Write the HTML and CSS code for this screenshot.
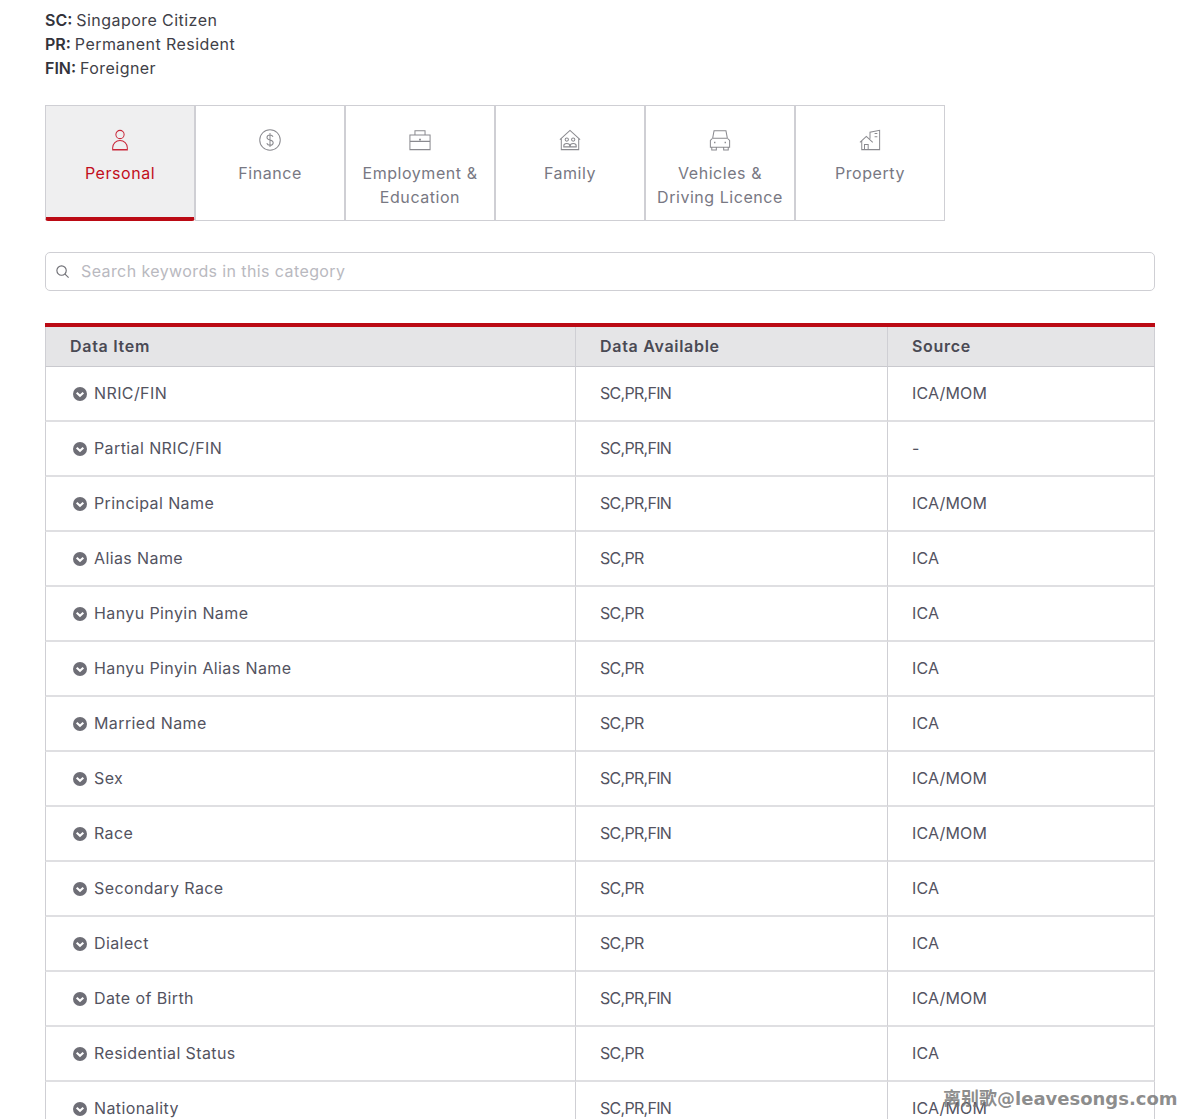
FILE: index.html
```html
<!DOCTYPE html>
<html lang="en">
<head>
<meta charset="utf-8">
<title>Data Items</title>
<link rel="stylesheet" href="styles.css">
</head>
<body>
<main class="page">
  <div class="legend">
    <div><b>SC:</b> Singapore Citizen</div>
    <div><b>PR:</b> Permanent Resident</div>
    <div><b>FIN:</b> Foreigner</div>
  </div>
  <nav class="tabs">
    <a class="tab active">
      <svg class="tab-icon" viewBox="0 0 24 24"><circle cx="12" cy="6" r="4.500"/><path d="M4 23v-2.500a8 8 0 0 1 16 0V23zM4 22.500h16"/></svg>
      <span>Personal</span>
    </a>
    <a class="tab">
      <svg class="tab-icon" viewBox="0 0 24 24"><circle cx="12" cy="12" r="11.200"/><path d="M15.300 8.500c-.6-1.400-1.800-2-3.300-2-1.800 0-3.300 1-3.300 2.700 0 3.500 6.800 2.100 6.800 5.700 0 1.700-1.600 2.800-3.500 2.800-1.600 0-3-.8-3.500-2.200M12 4.300v15.400"/></svg>
      <span>Finance</span>
    </a>
    <a class="tab">
      <svg class="tab-icon" viewBox="0 0 24 24"><path d="M1 6.500h22v16H1zM6.500 6.500V2h11v4.500M1 13.500h22"/><path class="dot" d="M11 10.500h2v2h-2z"/></svg>
      <span>Employment &amp; Education</span>
    </a>
    <a class="tab">
      <svg class="tab-icon" viewBox="0 0 24 24"><path d="M1 11.500 12 1.500l11 10M2.500 10.500V22.500h19V10.500"/><circle cx="8.500" cy="11.500" r="1.800"/><circle cx="15.500" cy="11.500" r="1.800"/><path d="M5.200 19.500v-1a3.300 2.600 0 0 1 6.600 0v1zM12.200 19.500v-1a3.300 2.600 0 0 1 6.600 0v1z"/></svg>
      <span>Family</span>
    </a>
    <a class="tab">
      <svg class="tab-icon" viewBox="0 0 24 24"><path d="M4 10 5.500 2h13L20 10M1.500 12.500 4 10h16l2.500 2.500V20h-21zM3 20v3h5v-3M16 20v3h5v-3"/><path class="dot" d="M5.500 14h1.500v1.500H5.500zM17 14h1.500v1.500H17z"/></svg>
      <span>Vehicles &amp; Driving Licence</span>
    </a>
    <a class="tab">
      <svg class="tab-icon" viewBox="0 0 24 24"><path d="M1 14.500 8 8l7 6.500M3 13v9.500h19.500V1.500L12 3.500v7M6 22.500V17h4v5.500M17 5h3M17 8.500h3"/></svg>
      <span>Property</span>
    </a>
  </nav>
  <label class="search">
    <svg class="search-icon" viewBox="0 0 16 16"><circle cx="7" cy="7" r="5"/><path d="m10.700 10.700 3.800 3.800"/></svg>
    <input class="search-input" type="text" placeholder="Search keywords in this category">
  </label>
  <table class="data">
    <colgroup><col class="c1"><col class="c2"><col class="c3"></colgroup>
    <thead><tr><th>Data Item</th><th>Data Available</th><th>Source</th></tr></thead>
    <tbody id="rows">
      <tr><td><svg class="chev" viewBox="0 0 14 14"><circle cx="7" cy="7" r="7"/><path d="m3.700 5.700 3.300 3.100 3.300-3.100"/></svg>NRIC/FIN</td><td>SC,PR,FIN</td><td>ICA/MOM</td></tr>
      <tr><td><svg class="chev" viewBox="0 0 14 14"><circle cx="7" cy="7" r="7"/><path d="m3.700 5.700 3.300 3.100 3.300-3.100"/></svg>Partial NRIC/FIN</td><td>SC,PR,FIN</td><td>-</td></tr>
      <tr><td><svg class="chev" viewBox="0 0 14 14"><circle cx="7" cy="7" r="7"/><path d="m3.700 5.700 3.300 3.100 3.300-3.100"/></svg>Principal Name</td><td>SC,PR,FIN</td><td>ICA/MOM</td></tr>
      <tr><td><svg class="chev" viewBox="0 0 14 14"><circle cx="7" cy="7" r="7"/><path d="m3.700 5.700 3.300 3.100 3.300-3.100"/></svg>Alias Name</td><td>SC,PR</td><td>ICA</td></tr>
      <tr><td><svg class="chev" viewBox="0 0 14 14"><circle cx="7" cy="7" r="7"/><path d="m3.700 5.700 3.300 3.100 3.300-3.100"/></svg>Hanyu Pinyin Name</td><td>SC,PR</td><td>ICA</td></tr>
      <tr><td><svg class="chev" viewBox="0 0 14 14"><circle cx="7" cy="7" r="7"/><path d="m3.700 5.700 3.300 3.100 3.300-3.100"/></svg>Hanyu Pinyin Alias Name</td><td>SC,PR</td><td>ICA</td></tr>
      <tr><td><svg class="chev" viewBox="0 0 14 14"><circle cx="7" cy="7" r="7"/><path d="m3.700 5.700 3.300 3.100 3.300-3.100"/></svg>Married Name</td><td>SC,PR</td><td>ICA</td></tr>
      <tr><td><svg class="chev" viewBox="0 0 14 14"><circle cx="7" cy="7" r="7"/><path d="m3.700 5.700 3.300 3.100 3.300-3.100"/></svg>Sex</td><td>SC,PR,FIN</td><td>ICA/MOM</td></tr>
      <tr><td><svg class="chev" viewBox="0 0 14 14"><circle cx="7" cy="7" r="7"/><path d="m3.700 5.700 3.300 3.100 3.300-3.100"/></svg>Race</td><td>SC,PR,FIN</td><td>ICA/MOM</td></tr>
      <tr><td><svg class="chev" viewBox="0 0 14 14"><circle cx="7" cy="7" r="7"/><path d="m3.700 5.700 3.300 3.100 3.300-3.100"/></svg>Secondary Race</td><td>SC,PR</td><td>ICA</td></tr>
      <tr><td><svg class="chev" viewBox="0 0 14 14"><circle cx="7" cy="7" r="7"/><path d="m3.700 5.700 3.300 3.100 3.300-3.100"/></svg>Dialect</td><td>SC,PR</td><td>ICA</td></tr>
      <tr><td><svg class="chev" viewBox="0 0 14 14"><circle cx="7" cy="7" r="7"/><path d="m3.700 5.700 3.300 3.100 3.300-3.100"/></svg>Date of Birth</td><td>SC,PR,FIN</td><td>ICA/MOM</td></tr>
      <tr><td><svg class="chev" viewBox="0 0 14 14"><circle cx="7" cy="7" r="7"/><path d="m3.700 5.700 3.300 3.100 3.300-3.100"/></svg>Residential Status</td><td>SC,PR</td><td>ICA</td></tr>
      <tr><td><svg class="chev" viewBox="0 0 14 14"><circle cx="7" cy="7" r="7"/><path d="m3.700 5.700 3.300 3.100 3.300-3.100"/></svg>Nationality</td><td>SC,PR,FIN</td><td>ICA/MOM</td></tr>
    </tbody>
  </table>
</main>
<div class="watermark">离别歌@leavesongs.com</div>
</body>
</html>
```
FILE: styles.css
```css
* { box-sizing: border-box; }
html, body { margin: 0; height: 1119px; overflow: hidden; background: #fff; }
body {
  position: relative;
  font-family: Inter, "Noto Sans", sans-serif;
  font-size: 16px;
  line-height: 24px;
  color: #53535f;
}
.page { padding: 8px 33px 0 45px; }
.legend { color: #3f3f48; letter-spacing: 0.45px; }
.legend b { font-weight: 600; color: #33333b; letter-spacing: 0; margin-right: -1px; }
.tabs { display: flex; margin-top: 25px; }
.tab {
  width: 150px;
  height: 116px;
  padding: 23px 8px 0;
  border: 1px solid #cfcfd4;
  text-align: center;
  color: #787883;
  letter-spacing: 0.55px;
  display: flex;
  flex-direction: column;
  align-items: center;
}
.tab-icon { width: 22px; height: 22px; fill: none; stroke: #8a8a8f; stroke-width: 1.1; flex: none; margin-bottom: 10px; }
.tab-icon .dot { fill: #8a8a8f; stroke: none; }
.tab.active {
  background: #efeff0;
  color: #c20e1c;
  border-bottom: 4px solid #bb0a14;
  border-radius: 0 0 3px 3px;
}
.tab.active .tab-icon { stroke: #c9283a; }
.search {
  display: flex;
  align-items: center;
  height: 39px;
  margin-top: 31px;
  padding: 0 9px;
  border: 1px solid #cfcfd4;
  border-radius: 5px;
}
.search-icon { width: 15px; height: 15px; fill: none; stroke: #6f6f75; stroke-width: 1.2; flex: none; }
.search-input {
  flex: 1;
  margin-left: 11px;
  padding: 0 0 2px;
  border: 0;
  outline: 0;
  background: none;
  font: inherit;
  letter-spacing: 0.4px;
}
.search-input::placeholder { color: #b9b9c0; opacity: 1; }
.data {
  width: 1110px;
  margin-top: 32px;
  table-layout: fixed;
  border-collapse: separate;
  border-spacing: 0;
  border-top: 4px solid #bb0a14;
}
.c1 { width: 530px; }
.c2 { width: 312px; }
.c3 { width: 268px; }
.data th {
  height: 40px;
  padding: 0 24px 2px;
  text-align: left;
  font-weight: 600;
  letter-spacing: 0.7px;
  color: #4a4a54;
  background: #e5e5e7;
  border-left: 1px solid #cfcfd4;
  border-bottom: 1px solid #c9c9ce;
}
.data td {
  height: 55px;
  padding: 0 24px 2px;
  border-left: 1px solid #cfcfd4;
  border-bottom: 2px solid #dfdfe2;
  white-space: nowrap;
  letter-spacing: 0.4px;
}
.data td:nth-child(2) { letter-spacing: -0.7px; }
.data td:nth-child(3) { letter-spacing: 0.15px; }
.data th:last-child, .data td:last-child { border-right: 1px solid #cfcfd4; }
.chev {
  width: 14px;
  height: 14px;
  margin: 0 7px 0 3px;
  vertical-align: -2px;
  fill: #6e6e76;
  stroke: none;
}
.chev path { fill: none; stroke: #fff; stroke-width: 2.1; }
.watermark {
  position: absolute;
  left: 943px;
  top: 1087px;
  font-family: "DejaVu Sans", "Noto Sans CJK SC", sans-serif;
  font-weight: 700;
  font-size: 18px;
  color: rgba(120, 120, 120, 0.85);
  white-space: nowrap;
}
```
